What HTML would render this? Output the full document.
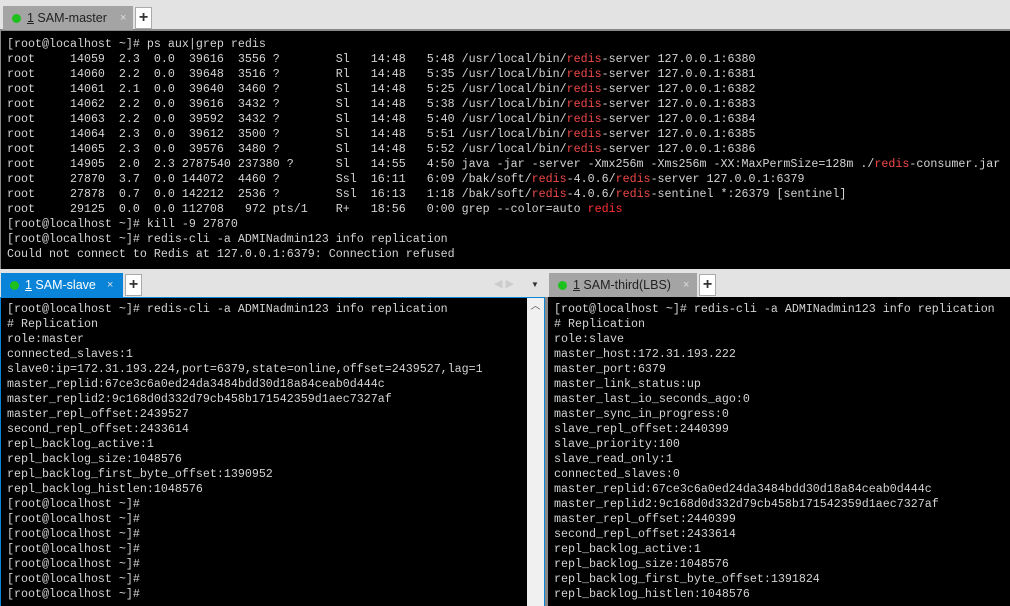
<!DOCTYPE html>
<html><head><meta charset="utf-8"><style>
*{margin:0;padding:0;box-sizing:border-box}
body{width:1010px;height:606px;background:#e3e3e3;position:relative;overflow:hidden;font-family:"Liberation Sans",sans-serif}
.abs{position:absolute}
pre{position:absolute;font-family:"Liberation Mono",monospace;font-size:11.67px;line-height:15px;color:#d4d4d4;white-space:pre}
.r{color:#f04848}.R{color:#ff3030}
.tab{position:absolute;height:24px;font-size:12.5px;line-height:24px;color:#222}
.dot{display:inline-block;width:9px;height:9px;border-radius:50%;background:#1ec01e;margin:0 6px 0 9px;vertical-align:-1px}
.x{position:absolute;font-size:11px;color:#ddd;top:0}
.plus{position:absolute;width:17px;height:22px;background:#fff;border:1px solid #aaa;font-size:16px;line-height:19px;text-align:center;color:#333;font-weight:bold}
</style></head><body>
<!-- top -->
<div class="abs" style="left:0;top:29px;width:1010px;height:2px;background:#888"></div>
<div class="tab" style="left:3px;top:6px;width:130px;background:#a4a4a4"><span class="dot"></span><u>1</u> SAM-master<span class="x" style="left:117px">×</span></div>
<div class="plus" style="left:135px;top:7px">+</div>
<div class="abs" style="left:0;top:31px;width:1010px;height:238px;background:#000;border-left:1px solid #888"></div>
<pre style="left:7px;top:37px">[root@localhost ~]# ps aux|grep redis
root     14059  2.3  0.0  39616  3556 ?        Sl   14:48   5:48 /usr/local/bin/<span class="r">redis</span>-server 127.0.0.1:6380
root     14060  2.2  0.0  39648  3516 ?        Rl   14:48   5:35 /usr/local/bin/<span class="r">redis</span>-server 127.0.0.1:6381
root     14061  2.1  0.0  39640  3460 ?        Sl   14:48   5:25 /usr/local/bin/<span class="r">redis</span>-server 127.0.0.1:6382
root     14062  2.2  0.0  39616  3432 ?        Sl   14:48   5:38 /usr/local/bin/<span class="r">redis</span>-server 127.0.0.1:6383
root     14063  2.2  0.0  39592  3432 ?        Sl   14:48   5:40 /usr/local/bin/<span class="r">redis</span>-server 127.0.0.1:6384
root     14064  2.3  0.0  39612  3500 ?        Sl   14:48   5:51 /usr/local/bin/<span class="r">redis</span>-server 127.0.0.1:6385
root     14065  2.3  0.0  39576  3480 ?        Sl   14:48   5:52 /usr/local/bin/<span class="r">redis</span>-server 127.0.0.1:6386
root     14905  2.0  2.3 2787540 237380 ?      Sl   14:55   4:50 java -jar -server -Xmx256m -Xms256m -XX:MaxPermSize=128m ./<span class="r">redis</span>-consumer.jar
root     27870  3.7  0.0 144072  4460 ?        Ssl  16:11   6:09 /bak/soft/<span class="r">redis</span>-4.0.6/<span class="r">redis</span>-server 127.0.0.1:6379
root     27878  0.7  0.0 142212  2536 ?        Ssl  16:13   1:18 /bak/soft/<span class="r">redis</span>-4.0.6/<span class="r">redis</span>-sentinel *:26379 [sentinel]
root     29125  0.0  0.0 112708   972 pts/1    R+   18:56   0:00 grep --color=auto <span class="R">redis</span>
[root@localhost ~]# kill -9 27870
[root@localhost ~]# redis-cli -a ADMINadmin123 info replication
Could not connect to Redis at 127.0.0.1:6379: Connection refused</pre>
<!-- bottom left -->
<div class="tab" style="left:1px;top:273px;width:122px;background:#0a84d8;color:#fff"><span class="dot"></span><u>1</u> SAM-slave<span class="x" style="left:106px">×</span></div>
<div class="plus" style="left:125px;top:274px">+</div>
<div class="abs" style="left:494px;top:277px;font-size:11px;color:#ccc">◀ ▶</div>
<div class="abs" style="left:531px;top:280px;font-size:8px;color:#333">▼</div>
<div class="abs" style="left:0;top:297px;width:545px;height:309px;background:#000;border:1px solid #0a84d8;border-bottom:none"></div>
<div class="abs" style="left:527px;top:298px;width:17px;height:308px;background:#f0f0f0;text-align:center;font-size:10px;color:#555;line-height:18px">︿</div>
<div class="abs" style="left:545px;top:297px;width:3px;height:309px;background:#888"></div>
<pre style="left:7px;top:302px">[root@localhost ~]# redis-cli -a ADMINadmin123 info replication
# Replication
role:master
connected_slaves:1
slave0:ip=172.31.193.224,port=6379,state=online,offset=2439527,lag=1
master_replid:67ce3c6a0ed24da3484bdd30d18a84ceab0d444c
master_replid2:9c168d0d332d79cb458b171542359d1aec7327af
master_repl_offset:2439527
second_repl_offset:2433614
repl_backlog_active:1
repl_backlog_size:1048576
repl_backlog_first_byte_offset:1390952
repl_backlog_histlen:1048576
[root@localhost ~]#
[root@localhost ~]#
[root@localhost ~]#
[root@localhost ~]#
[root@localhost ~]#
[root@localhost ~]#
[root@localhost ~]#</pre>
<!-- bottom right -->
<div class="tab" style="left:549px;top:273px;width:148px;background:#a4a4a4"><span class="dot"></span><u>1</u> SAM-third(LBS)<span class="x" style="left:134px">×</span></div>
<div class="plus" style="left:699px;top:274px">+</div>
<div class="abs" style="left:548px;top:297px;width:462px;height:309px;background:#000"></div>
<pre style="left:554px;top:302px">[root@localhost ~]# redis-cli -a ADMINadmin123 info replication
# Replication
role:slave
master_host:172.31.193.222
master_port:6379
master_link_status:up
master_last_io_seconds_ago:0
master_sync_in_progress:0
slave_repl_offset:2440399
slave_priority:100
slave_read_only:1
connected_slaves:0
master_replid:67ce3c6a0ed24da3484bdd30d18a84ceab0d444c
master_replid2:9c168d0d332d79cb458b171542359d1aec7327af
master_repl_offset:2440399
second_repl_offset:2433614
repl_backlog_active:1
repl_backlog_size:1048576
repl_backlog_first_byte_offset:1391824
repl_backlog_histlen:1048576</pre>
</body></html>
